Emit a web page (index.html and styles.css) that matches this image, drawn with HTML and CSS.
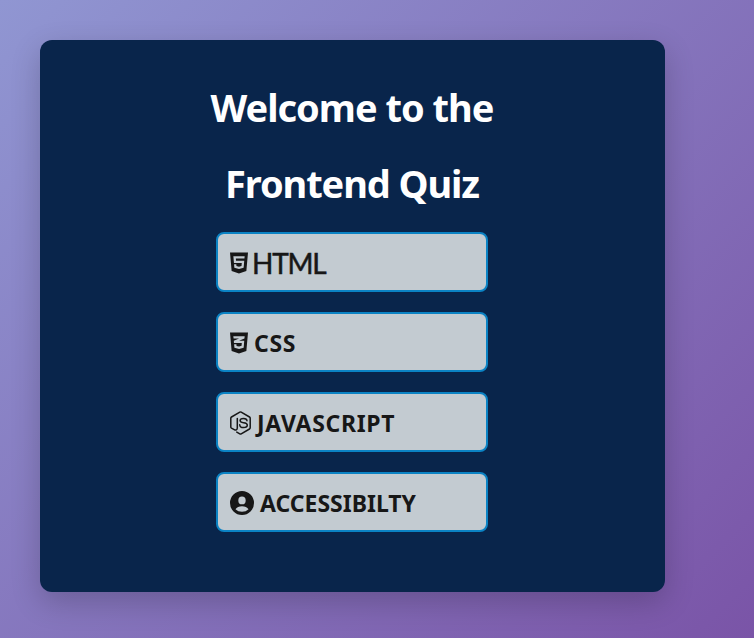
FILE: index.html
```html
<!DOCTYPE html>
<html lang="en">
<head>
<meta charset="utf-8">
<title>Frontend Quiz</title>
<link rel="stylesheet" href="styles.css">
</head>
<body>
<main class="card">
  <h1 class="title"><span class="line line-top">Welcome to the</span><span class="line line-bottom">Frontend Quiz</span></h1>
  <nav class="topics">
    <button class="topic" type="button">
      <svg class="icon icon-shield" viewBox="0 0 384 512"><path d="M0 32l34.9 395.800L191.500 480l157.600-52.200L384 32H0zm308.200 127.900H124.400l4.100 49.400h175.600l-13.600 148.400-97.900 27v.3h-1.100l-98.700-27.300-6-75.800h47.700L138 320l53.500 14.500 53.700-14.500 6-62.200H84.300L71.500 112.200h241.100l-4.400 47.700z"/></svg>
      <span class="label label-html">HTML</span>
    </button>
    <button class="topic" type="button">
      <svg class="icon icon-shield" viewBox="0 0 384 512"><path d="M0 32l34.9 395.8L192 480l157.1-52.2L384 32H0zm313.1 80l-4.8 47.3L193 208.6l-.3.1h111.5l-12.8 146.6-98.2 28.7-98.8-29.2-6.4-73.9h48.9l3.2 38.3 52.6 13.3 54.7-15.4 3.7-61.6-166.3-.5v-.1l-.2.1-3.6-46.3L193.1 162l6.5-2.7H76.7L70.9 112h242.2z"/></svg>
      <span class="label label-css">CSS</span>
    </button>
    <button class="topic" type="button">
      <svg class="icon icon-node" viewBox="0 0 21 24"><path class="stroke" d="M7.300 7.400v9.600c0 2-1.500 2.500-3.100 1.600L1.500 17.200Q.8 16.800.8 16V7.200Q.8 6.400 1.500 6L9.800 1.200q.7-.4 1.400 0L19.500 6q.7.400.7 1.200v9.600q0 .8-.7 1.200l-8.300 4.800q-.7.400-1.400 0L6.800 21.100"/><path class="stroke" d="M17 9.800c-.1-1.700-1.300-2.400-3.500-2.400-2.200 0-3.400.7-3.400 2.200 0 1.600 1.200 1.900 3.400 2.100 2.600.2 3.800.8 3.800 2.400s-1.400 2.500-3.700 2.500c-2.600 0-3.800-.9-3.900-2.900"/></svg>
      <span class="label label-js">JAVASCRIPT</span>
    </button>
    <button class="topic" type="button">
      <svg class="icon icon-user" viewBox="0 0 24 24"><path fill-rule="evenodd" d="M12 0a12 12 0 1 0 0 24 12 12 0 0 0 0-24zm0 5.500a3.700 3.900 0 1 1 0 7.800 3.700 3.900 0 0 1 0-7.800zm0 15.200c-2.600 0-4.800-.8-6.500-2.500 1.200-2 3.600-3 6.500-3s5.300 1 6.500 3c-1.700 1.700-3.900 2.500-6.500 2.500z"/></svg>
      <span class="label label-access">ACCESSIBILTY</span>
    </button>
  </nav>
</main>
</body>
</html>
```
FILE: styles.css
```css
* {
  box-sizing: border-box;
}

body {
  margin: 0;
  padding: 40px;
  min-height: 638px;
  background: linear-gradient(135deg, #9096d2 0%, #7a54a7 100%);
  font-family: "Noto Sans", "Open Sans", sans-serif;
}

.card {
  width: 625px;
  height: 552px;
  padding: 29px 1px 0 0;
  display: flex;
  flex-direction: column;
  align-items: center;
  border-radius: 12px;
  background: #09254b;
  box-shadow: 0 10px 30px rgba(0, 0, 0, 0.2);
}

.title {
  margin: 0 0 11px;
  color: #fff;
  font-size: 38px;
  font-weight: 700;
  line-height: 76px;
  text-align: center;
}

.line {
  display: block;
  white-space: nowrap;
}

.line-top {
  letter-spacing: -1px;
}

.line-bottom {
  letter-spacing: -1.1px;
}

.topics {
  display: flex;
  flex-direction: column;
  gap: 20px;
}

.topic {
  width: 272px;
  height: 60px;
  padding: 0 12px;
  display: flex;
  align-items: center;
  border: 2px solid #0b83c4;
  border-radius: 8px;
  background: #c3cbd1;
  color: #171717;
  font: 700 23px "Noto Sans", "Open Sans", sans-serif;
}

.icon {
  flex: none;
  height: 24px;
  margin-top: 1px;
  fill: currentColor;
}

.icon-shield {
  width: 18px;
  margin-right: 6px;
}

.icon-node {
  width: 21px;
  margin-right: 6px;
}

.icon-user {
  width: 24px;
  margin-right: 6px;
}

.stroke {
  fill: none;
  stroke: currentColor;
  stroke-width: 1.5;
  stroke-linecap: round;
}

.label {
  padding-top: 2px;
  line-height: 32px;
  white-space: nowrap;
}

.label-html {
  margin-left: -2px;
  font-family: Lato, sans-serif;
  font-size: 28px;
  font-weight: 400;
  letter-spacing: -1.2px;
  -webkit-text-stroke: 0.5px currentColor;
}

.label-css {
  letter-spacing: 0.7px;
}

.label-js {
  letter-spacing: 0.65px;
}
```
